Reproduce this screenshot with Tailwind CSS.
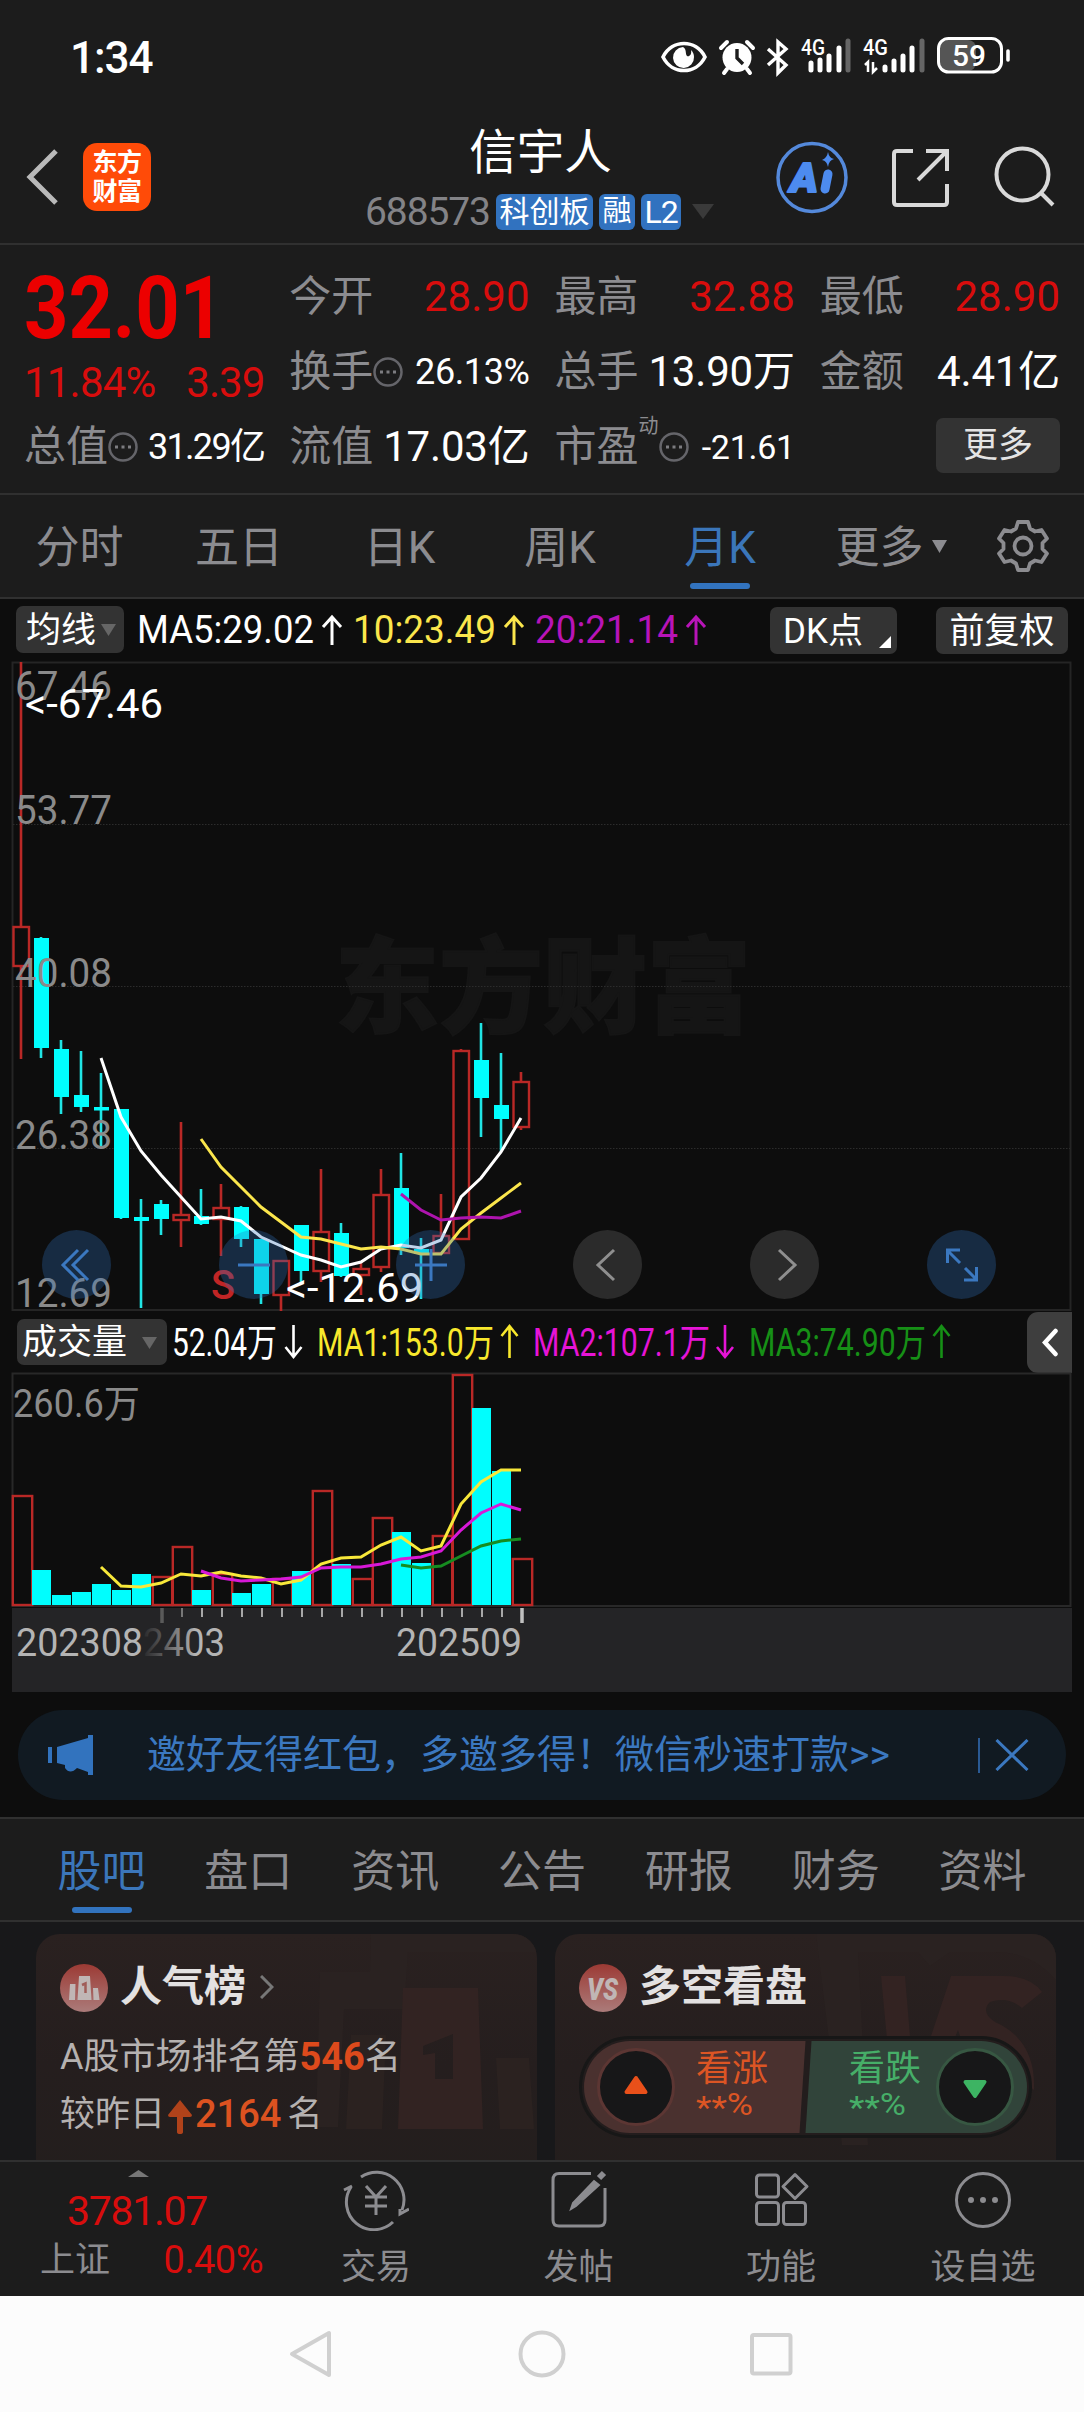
<!DOCTYPE html>
<html lang="zh-CN">
<head>
  <meta charset="UTF-8" />
  <meta name="viewport" content="width=device-width, initial-scale=1.0" />
  <title>信宇人 688573</title>
  <script src="https://cdn.jsdelivr.net/npm/@tailwindcss/browser@4"></script>
</head>
<body class="w-[1084px] h-[2412px] overflow-hidden flex flex-col bg-[#1c1c1c] text-white leading-none whitespace-nowrap font-[Roboto,'Noto_Sans_CJK_SC',sans-serif]">

  <!-- Status bar -->
  <div class="h-[114px] shrink-0 flex items-center justify-between pl-[70px] pr-[73px]">
    <div class="text-[44px] tracking-[-1px] font-medium pt-[2px]">1:34</div>
    <svg class="w-[350px] h-[40px] overflow-visible" viewBox="661 37 350 40" fill="none" stroke="#fff">
      <!-- eye -->
      <path d="M663 57c9-18 33-18 42 0c-9 18-33 18-42 0z" stroke-width="3.6" />
      <path d="M683 47a10.500 10.500 0 1 0 11 10c0-3-1-5-3-7c1 5-2 7-4 6c-2-2 0-7-4-9z" fill="#fff" stroke="none" />
      <!-- alarm -->
      <circle cx="737" cy="57.500" r="14.500" fill="#fff" stroke="none" />
      <path d="M721 48l6-6M753 48l-6-6M727 69l-3 4M747 69l3 4" stroke-width="4" stroke-linecap="round" />
      <path d="M737 49v9l6 6" stroke="#1c1c1c" stroke-width="3.4" />
      <!-- bluetooth -->
      <path d="M768 49l18 16l-8 8V42l8 7l-18 16" stroke-width="3.4" />
      <!-- signal 1 -->
      <text x="801" y="55" font-size="22" font-weight="500" fill="#fff" stroke="none" textLength="24" lengthAdjust="spacingAndGlyphs">4G</text>
      <path d="M811 63v7M820 60v10M829 56v14M839 48v22" stroke-width="5" stroke-linecap="round" />
      <path d="M848 41v29" stroke="#666" stroke-width="5" stroke-linecap="round" />
      <!-- signal 2 -->
      <text x="863" y="55" font-size="22" font-weight="500" fill="#fff" stroke="none" textLength="25" lengthAdjust="spacingAndGlyphs">4G</text>
      <path d="M868 72V62l-3 3M873 62v10l4-4" stroke-width="2.500" />
      <path d="M885 67v3M894 61v9M903 56v14M912 48v22" stroke-width="5" stroke-linecap="round" />
      <path d="M922 41v29" stroke="#666" stroke-width="5" stroke-linecap="round" />
      <!-- battery -->
      <rect x="940" y="40" width="36" height="31" rx="8" fill="#555" stroke="none" />
      <rect x="938.500" y="38.500" width="63" height="33.500" rx="10" stroke-width="3" />
      <path d="M1008 51v9" stroke-width="3.600" stroke-linecap="round" />
      <text x="952" y="66" font-size="30" font-weight="500" fill="#fff" stroke="none" textLength="34" lengthAdjust="spacingAndGlyphs">59</text>
    </svg>
  </div>

  <!-- Header -->
  <div class="h-[131px] shrink-0 flex border-b-2 border-[#303030] relative">
    <svg class="w-[32px] h-[56px] mt-[35px] ml-[26px]" viewBox="0 0 32 56" fill="none" stroke="#b9b9b9" stroke-width="5"><path d="M30 2L4 28l26 26" /></svg>
    <div class="mt-[29px] ml-[25px] size-[68px] rounded-[14px] bg-[#ff4b08] flex flex-col items-center justify-center gap-[4px] text-[25px] font-bold tracking-[-0.5px]">
      <div>东方</div>
      <div>财富</div>
    </div>
    <div class="w-[391px] ml-[194px] flex flex-col">
      <div class="mt-[16px] text-[47.5px] text-center">信宇人</div>
      <div class="mt-[14px] h-[40px] flex items-center">
        <span class="text-[39px] text-[#838387] tracking-[-1.1px] w-[127px] ml-[20px] pt-[2px]">688573</span>
        <span class="ml-[4px] h-[36px] w-[97px] rounded-[6px] bg-[#3172bf] text-[30px] flex items-center justify-center">科创板</span>
        <span class="ml-[6px] h-[36px] w-[36px] rounded-[6px] bg-[#3172bf] text-[29px] flex items-center justify-center">融</span>
        <span class="ml-[6px] h-[36px] w-[40px] rounded-[6px] bg-[#3172bf] text-[32px] tracking-[-1px] flex items-center justify-center">L2</span>
        <svg class="ml-[11px] w-[22px] h-[15px] shrink-0" viewBox="0 0 22 15"><path d="M0 0h22L11 15z" fill="#3a3a3a" /></svg>
      </div>
    </div>
    <svg class="absolute left-[770px] top-[21px] w-[300px] h-[84px]" viewBox="770 135 300 84" fill="none">
      <circle cx="812" cy="177.500" r="34" stroke="#5489db" stroke-width="3.500" />
      <text x="790" y="192" font-size="41" font-weight="900" font-style="italic" fill="#4d8bef" stroke="#4d8bef" stroke-width="2" stroke-linejoin="round" textLength="28" lengthAdjust="spacingAndGlyphs">A</text>
      <path d="M828 174l-3 15" stroke="#4d8bef" stroke-width="9" stroke-linecap="round" />
      <path d="M828 152q1 6 6 7q-5 1-6 8q-1-6-6-7q5-2 6-8z" fill="#4d8bef" />
      <g stroke="#d9d9d9" stroke-width="4">
        <path d="M913 151h-16q-3 0-3 3v48q0 3 3 3h47q3 0 3-3v-18M926 151h21v20M946 152l-28 28" />
        <circle cx="1022.500" cy="174.500" r="26" />
        <path d="M1041 193l12 12" />
      </g>
    </svg>
  </div>

  <!-- Quote panel -->
  <div class="h-[250px] shrink-0 border-b-2 border-[#303030] pt-[14px] pl-[24px] pr-[24px] grid grid-cols-4 gap-x-[25px] text-[42px]">
    <div>
      <div class="h-[98px] flex items-center text-[88px] font-bold text-[#ec0000]"><span class="origin-left scale-x-[0.88]">32.01</span></div>
      <div class="h-[52px] flex items-center justify-between text-[#d80d0d]">
        <span class="tracking-[-0.8px]">11.84%</span>
        <span class="tracking-[-1px]">3.39</span>
      </div>
      <div class="h-[75px] flex items-center">
        <span class="text-[#8c8c90]">总值</span>
        <svg class="size-[30px]" viewBox="0 0 30 30"><circle cx="15" cy="15" r="13.500" fill="none" stroke="#65656a" stroke-width="2.500" /><path d="M7 13.500h3v3h-3zM13.500 13.500h3v3h-3zM20 13.500h3v3h-3z" fill="#7c7c80" /></svg>
        <span class="ml-auto text-[36px] tracking-[-1.7px]">31.29亿</span>
      </div>
    </div>
    <div>
      <div class="h-[75px] flex items-center justify-between"><span class="text-[#8c8c90]">今开</span><span class="text-[#d80d0d]">28.90</span></div>
      <div class="h-[75px] flex items-center">
        <span class="text-[#8c8c90]">换手</span>
        <svg class="size-[30px]" viewBox="0 0 30 30"><circle cx="15" cy="15" r="13.500" fill="none" stroke="#65656a" stroke-width="2.500" /><path d="M7 13.500h3v3h-3zM13.500 13.500h3v3h-3zM20 13.500h3v3h-3z" fill="#7c7c80" /></svg>
        <span class="ml-auto text-[36px] tracking-[-0.4px]">26.13%</span>
      </div>
      <div class="h-[75px] flex items-center justify-between"><span class="text-[#8c8c90]">流值</span><span class="tracking-[-0.2px]">17.03亿</span></div>
    </div>
    <div>
      <div class="h-[75px] flex items-center justify-between"><span class="text-[#8c8c90]">最高</span><span class="text-[#d80d0d]">32.88</span></div>
      <div class="h-[75px] flex items-center justify-between"><span class="text-[#8c8c90]">总手</span><span class="tracking-[-0.2px]">13.90万</span></div>
      <div class="h-[75px] flex items-center">
        <span class="text-[#8c8c90]">市盈</span>
        <span class="text-[#8c8c90] text-[20px] self-start mt-[7px]">动</span>
        <svg class="size-[30px]" viewBox="0 0 30 30"><circle cx="15" cy="15" r="13.500" fill="none" stroke="#65656a" stroke-width="2.500" /><path d="M7 13.500h3v3h-3zM13.500 13.500h3v3h-3zM20 13.500h3v3h-3z" fill="#7c7c80" /></svg>
        <span class="ml-auto text-[34px] tracking-[-0.3px]">-21.61</span>
      </div>
    </div>
    <div>
      <div class="h-[75px] flex items-center justify-between"><span class="text-[#8c8c90]">最低</span><span class="text-[#d80d0d]">28.90</span></div>
      <div class="h-[75px] flex items-center justify-between"><span class="text-[#8c8c90]">金额</span><span class="tracking-[-0.2px]">4.41亿</span></div>
      <div class="h-[75px] flex items-center justify-end">
        <div class="w-[124px] h-[55px] mt-[-3px] rounded-[7px] bg-[#333] text-[#e4e4e4] text-[35px] flex items-center justify-center">更多</div>
      </div>
    </div>
  </div>

  <!-- Period tabs -->
  <div class="h-[104px] shrink-0 border-b-2 border-[#303030] flex text-[44px] text-[#8c8c90]">
    <div class="w-[159px] flex items-center justify-center pt-[4px]">分时</div>
    <div class="w-[160px] flex items-center justify-center pt-[4px]">五日</div>
    <div class="w-[161px] flex items-center justify-center pt-[4px]">日K</div>
    <div class="w-[160px] flex items-center justify-center pt-[4px]">周K</div>
    <div class="w-[160px] flex items-center justify-center pt-[4px] text-[#3b76ba] relative">月K
      <div class="absolute bottom-[8px] left-[50px] w-[60px] h-[6px] rounded-full bg-[#3273be]"></div>
    </div>
    <div class="w-[182px] flex items-center justify-center gap-[8px] pt-[4px]">更多
      <svg class="w-[15px] h-[13px] mt-[-3px]" viewBox="0 0 15 13"><path d="M0 0h15L7.500 13z" fill="#8c8c90" /></svg>
    </div>
    <div class="w-[82px] flex items-center justify-center">
      <svg class="w-[54px] h-[54px]" viewBox="-27 -27 54 54" fill="none" stroke="#8c8c90" stroke-width="3.800" stroke-linejoin="round">
        <path d="M-5-24H5L7-17.500L12-14.500L18.500-16L24-7.500L19.500-3V3L24 7.500L18.500 16L12 14.500L7 17.500L5 24H-5L-7 17.500L-12 14.500L-18.500 16L-24 7.500L-19.500 3V-3L-24-7.500L-18.500-16L-12-14.500L-7-17.500Z" />
        <circle r="8.500" />
      </svg>
    </div>
  </div>

  <div class="bg-[#0d0d0d] shrink-0 h-[1218px] flex flex-col">
    <!-- MA legend -->
    <div class="h-[62px] shrink-0 flex pt-[7px] text-[35px]">
      <div class="ml-[16px] w-[108px] h-[47px] rounded-[7px] bg-[#333] flex items-center pl-[10px] gap-[5px] pt-[1px]">均线
        <svg class="w-[15px] h-[12px]" viewBox="0 0 15 12"><path d="M0 0h15L7.500 12z" fill="#666" /></svg>
      </div>
      <svg class="w-[646px] h-[50px]" viewBox="124 606 646 50" font-size="38" fill="none" stroke-width="3">
        <g fill="#fff" stroke="none"><text x="137" y="643" textLength="177" lengthAdjust="spacingAndGlyphs">MA5:29.02</text></g>
        <path d="M332 645v-28M323 627l9-10l9 10" stroke="#fff" />
        <text x="353" y="643" fill="#fbe64c" textLength="143" lengthAdjust="spacingAndGlyphs">10:23.49</text>
        <path d="M514 645v-28M505 627l9-10l9 10" stroke="#fbe64c" />
        <text x="535" y="643" fill="#b814b8" textLength="143" lengthAdjust="spacingAndGlyphs">20:21.14</text>
        <path d="M696 645v-28M687 627l9-10l9 10" stroke="#b814b8" />
      </svg>
      <div class="w-[127px] h-[47px] mt-[1px] rounded-[7px] bg-[#333] flex items-center pl-[13px] pt-[1px] relative">DK点
        <svg class="absolute right-[6px] bottom-[6px] size-[12px]" viewBox="0 0 12 12"><path d="M12 0v12H0z" fill="#fff" /></svg>
      </div>
      <div class="ml-[39px] w-[132px] h-[47px] mt-[1px] rounded-[7px] bg-[#333] flex items-center justify-center pt-[1px]">前复权</div>
    </div>

    <!-- Price chart -->
    <div class="h-[650px] shrink-0 relative">
      <svg class="w-[1084px] h-[650px] block overflow-visible" viewBox="0 661 1084 650" fill="none">
        <text x="335" y="1025" font-size="104" font-weight="900" fill="#151515" stroke="#151515" stroke-width="2" textLength="416" lengthAdjust="spacingAndGlyphs">东方财富</text>
        <path d="M12.500 662.500H1070.500V1310H12.500Z" stroke="#252525" stroke-width="2" />
        <path d="M13 824.500H1070M13 986.500H1070M13 1148.500H1070" stroke="#2c2c2c" stroke-dasharray="1.500 1.500" />
        <g id="candles"></g>
        <polyline class="ma" data-start="4" data-y="1058,1117,1151,1175,1197,1219,1217,1221,1237,1246,1255,1260,1267,1262,1249,1245,1248,1240,1197,1178,1152,1118" stroke="#fff" stroke-width="3" />
        <polyline class="ma" data-start="9" data-y="1139,1167,1187,1207,1222,1237,1239,1244,1249,1247,1249,1254,1254,1229,1213,1198,1183" stroke="#fbe64c" stroke-width="3" />
        <polyline class="ma" data-start="19" data-y="1194,1210,1220,1218,1217,1218,1211" stroke="#ae14ae" stroke-width="3" />
        <g font-size="41" fill="#8a8a8a">
          <text x="15" y="700" textLength="97" lengthAdjust="spacingAndGlyphs">67.46</text>
          <text x="15" y="824" textLength="97" lengthAdjust="spacingAndGlyphs">53.77</text>
          <text x="15" y="987" textLength="97" lengthAdjust="spacingAndGlyphs">40.08</text>
          <text x="15" y="1149" textLength="97" lengthAdjust="spacingAndGlyphs">26.38</text>
          <text x="15" y="1307" textLength="97" lengthAdjust="spacingAndGlyphs">12.69</text>
        </g>
        <g font-size="41" fill="#fff">
          <text x="25" y="718" textLength="138" lengthAdjust="spacingAndGlyphs">&lt;-67.46</text>
          <text x="286" y="1302" textLength="137" lengthAdjust="spacingAndGlyphs">&lt;-12.69</text>
        </g>
        <text x="211" y="1299" font-size="41" font-weight="500" fill="#c02525" textLength="24" lengthAdjust="spacingAndGlyphs">S</text>
      </svg>

      <!-- Chart controls -->
      <div class="absolute left-[42px] top-[569px] w-[954px] flex justify-between">
        <div class="size-[69px] rounded-full bg-[#3070be]/30 flex items-center justify-center">
          <svg class="size-[34px] ml-[-6px]" viewBox="0 0 34 34" fill="none" stroke="#3b78c0" stroke-width="3"><path d="M21 2L6 17l15 15M31 2L16 17l15 15" /></svg>
        </div>
        <div class="size-[69px] rounded-full bg-[#3070be]/30 flex items-center justify-center">
          <svg class="size-[34px]" viewBox="0 0 34 34" fill="none" stroke="#3b78c0" stroke-width="3"><path d="M1 17h32" /></svg>
        </div>
        <div class="size-[69px] rounded-full bg-[#3070be]/30 flex items-center justify-center">
          <svg class="size-[34px]" viewBox="0 0 34 34" fill="none" stroke="#3b78c0" stroke-width="3"><path d="M1 17h32M17 1v32" /></svg>
        </div>
        <div class="size-[69px] rounded-full bg-[#2b2b2b] flex items-center justify-center">
          <svg class="size-[34px]" viewBox="0 0 34 34" fill="none" stroke="#8f8f8f" stroke-width="3"><path d="M23 2L7 17l16 15" /></svg>
        </div>
        <div class="size-[69px] rounded-full bg-[#2b2b2b] flex items-center justify-center">
          <svg class="size-[34px]" viewBox="0 0 34 34" fill="none" stroke="#8f8f8f" stroke-width="3"><path d="M11 2l16 15L11 32" /></svg>
        </div>
        <div class="size-[69px] rounded-full bg-[#3070be]/30 flex items-center justify-center">
          <svg class="size-[34px]" viewBox="0 0 34 34" fill="none" stroke="#3b78c0" stroke-width="3"><path d="M15 2H2.500V15M3 3l12 12M20 20l12 12M19 32h12.500V19" /></svg>
        </div>
      </div>
    </div>

    <!-- Volume legend -->
    <div class="h-[61px] shrink-0 flex text-[35px]">
      <div class="ml-[17px] mt-[8px] w-[150px] h-[46px] rounded-[7px] bg-[#333] flex items-center pl-[5px] gap-[15px] pt-[1px]">成交量
        <svg class="w-[15px] h-[12px]" viewBox="0 0 15 12"><path d="M0 0h15L7.500 12z" fill="#666" /></svg>
      </div>
      <svg class="w-[860px] h-[61px]" viewBox="167 1311 860 61" font-size="38" fill="none" stroke-width="2.600">
        <text x="172" y="1356" fill="#fff" textLength="105" lengthAdjust="spacingAndGlyphs">52.04万</text>
        <path d="M293.500 1325v32M285.500 1347l8 10l8-10" stroke="#fff" />
        <text x="317" y="1356" fill="#f8e82c" textLength="177" lengthAdjust="spacingAndGlyphs">MA1:153.0万</text>
        <path d="M509.500 1358v-32M501.500 1336l8-10l8 10" stroke="#f8e82c" />
        <text x="533" y="1356" fill="#e614d6" textLength="177" lengthAdjust="spacingAndGlyphs">MA2:107.1万</text>
        <path d="M725 1325v32M717 1347l8 10l8-10" stroke="#e614d6" />
        <text x="749" y="1356" fill="#169016" textLength="177" lengthAdjust="spacingAndGlyphs">MA3:74.90万</text>
        <path d="M941.500 1358v-32M933.500 1336l8-10l8 10" stroke="#169016" />
      </svg>
      <div class="w-[45px] h-[61px] mt-[1px] rounded-l-[11px] bg-[#3e3e3e] flex items-center justify-center">
        <svg class="w-[16px] h-[29px]" viewBox="0 0 16 29" fill="none" stroke="#fff" stroke-width="4.500" stroke-linecap="round"><path d="M13.500 3L3 14.500l10.500 11.500" /></svg>
      </div>
    </div>

    <!-- Volume chart + date axis -->
    <svg class="w-[1084px] h-[321px] shrink-0 block" viewBox="0 1372 1084 321" fill="none">
      <defs>
        <linearGradient id="fade" gradientUnits="userSpaceOnUse" x1="140" y1="0" x2="215" y2="0">
          <stop offset="0" stop-color="#242426" />
          <stop offset="0.200" stop-color="#444446" />
          <stop offset="0.750" stop-color="#b4b4b4" />
        </linearGradient>
      </defs>
      <path d="M12.500 1373.500H1070.500V1606H12.500Z" stroke="#282828" stroke-width="2" />
      <rect x="12" y="1608" width="1060" height="84" fill="#242426" />
      <g id="volumes"></g>
      <polyline class="ma" data-start="4" data-y="1567,1586,1587,1583,1574,1576,1572,1576,1578,1584,1580,1564,1558,1557,1545,1537,1551,1546,1504,1482,1470,1470" stroke="#f8e83a" stroke-width="3" />
      <polyline class="ma" data-start="9" data-y="1571,1578,1581,1580,1579,1577,1568,1567,1567,1564,1559,1557,1551,1530,1513,1504,1510" stroke="#d818d8" stroke-width="3" />
      <polyline class="ma" data-start="19" data-y="1565,1568,1566,1556,1546,1541,1539" stroke="#168c20" stroke-width="3" />
      <path d="M162 1608v15" stroke="#5a5a5a" stroke-width="3.500" />
      <path d="M182 1608v9" stroke="#777" stroke-width="2" />
      <path d="M202 1608v9M222 1608v9M242 1608v9M262 1608v9M282 1608v9M302 1608v9M322 1608v9M342 1608v9M362 1608v9M382 1608v9M402 1608v9M422 1608v9M442 1608v9M462 1608v9M482 1608v9M502 1608v9" stroke="#a8a8a8" stroke-width="2" />
      <path d="M522 1608v15" stroke="#c0c0c0" stroke-width="3.500" />
      <text x="13" y="1417" font-size="38" fill="#8a8a8a" textLength="127" lengthAdjust="spacingAndGlyphs">260.6万</text>
      <g font-size="38">
        <text x="143" y="1656" fill="url(#fade)" textLength="82" lengthAdjust="spacingAndGlyphs">2403</text>
        <text x="16" y="1656" fill="#b4b4b4" textLength="127" lengthAdjust="spacingAndGlyphs">202308</text>
        <text x="396" y="1656" fill="#b4b4b4" textLength="126" lengthAdjust="spacingAndGlyphs">202509</text>
      </g>
    </svg>

    <!-- Promo banner -->
    <div class="mt-[17px] ml-[18px] w-[1048px] h-[90px] shrink-0 rounded-full bg-[#111a22] flex items-center text-[39px] text-[#3b78c0]">
      <svg class="ml-[30px] w-[45px] h-[40px] shrink-0" viewBox="0 0 45 40" fill="#3273be"><path d="M0 12h4v16H0zM9 12L40 3V0h5v40h-5v-3l-11-4q-7 7-12 0v-3l-8-2z" /></svg>
      <div class="ml-[54px] w-[750px]">邀好友得红包，多邀多得！微信秒速打款&gt;&gt;</div>
      <div class="ml-[81px] w-[1.500px] h-[35px] bg-[#2a5a94]"></div>
      <svg class="ml-[15px] w-[34px] h-[32px]" viewBox="0 0 34 32" fill="none" stroke="#3b78c0" stroke-width="3"><path d="M1.500 1l31 30M32.500 1l-31 30" /></svg>
    </div>
  </div>

  <!-- Info tabs -->
  <div class="h-[105px] shrink-0 border-y-2 border-[#303030] px-[28px] flex text-[44px] text-[#8c8c90]">
    <div class="flex-1 flex items-center justify-center pt-[4px] text-[#3b76ba] relative">股吧
      <div class="absolute bottom-[7px] left-[44px] w-[60px] h-[6px] rounded-full bg-[#3273be]"></div>
    </div>
    <div class="flex-1 flex items-center justify-center pt-[4px]">盘口</div>
    <div class="flex-1 flex items-center justify-center pt-[4px]">资讯</div>
    <div class="flex-1 flex items-center justify-center pt-[4px]">公告</div>
    <div class="flex-1 flex items-center justify-center pt-[4px]">研报</div>
    <div class="flex-1 flex items-center justify-center pt-[4px]">财务</div>
    <div class="flex-1 flex items-center justify-center pt-[4px]">资料</div>
  </div>

  <!-- Cards -->
  <div class="h-[238px] shrink-0 bg-[#18181a] pt-[12px] pl-[36px] flex gap-[18px] overflow-hidden">
    <div class="w-[501px] h-[260px] rounded-[24px] bg-linear-to-b from-[#2a2120] via-[#251e1e] to-[#231e1d] relative overflow-hidden">
      <svg class="absolute inset-0 w-[501px] h-[260px]" viewBox="36 1934 501 260">
        <path d="M371 1934H537V2036H551L545 1952H408L404 2009H344L338 2127H316L320 1972H370Z" fill="#2a2221" />
        <path d="M403 1988H478L483 2129H398ZM423 2046V2055L435 2053V2079H453V2034Z" fill="#322322" fill-rule="evenodd" />
        <path d="M351 2035H386L382 2129H346ZM496 2058H529L534 2129H500Z" fill="#2b2220" />
      </svg>
      <div class="relative pl-[24px] pt-[30px]">
        <div class="flex items-center h-[48px]">
          <svg class="size-[48px]" viewBox="0 0 48 48">
            <defs><linearGradient id="badge" x1="0" y1="0" x2="0" y2="1"><stop offset="0" stop-color="#9c3a34" /><stop offset="1" stop-color="#ab7b7a" /></linearGradient></defs>
            <circle cx="24" cy="24" r="24" fill="url(#badge)" />
            <path d="M10 20h5.500L15 36H9zM19 12h11l1.500 24H17.500zM33 24h5l1.500 12H33.500z" fill="#c0b6b5" />
            <path d="M22 21l3.500-1.500V29" fill="none" stroke="#a05c58" stroke-width="2.500" />
          </svg>
          <span class="ml-[12px] text-[42px] font-bold text-[#e3e1e1] mt-[-3px]">人气榜</span>
          <svg class="ml-[14px] mt-[-2px] w-[14px] h-[24px]" viewBox="0 0 14 24" fill="none" stroke="#777" stroke-width="3"><path d="M1 1l11 11L1 23" /></svg>
        </div>
        <div class="flex items-center h-[40px] mt-[25px] text-[36px] text-[#b5b1b0]">A股市场排名第<span class="text-[38px] font-bold text-[#dd4a1c]">546</span>名</div>
        <div class="flex items-center h-[40px] mt-[17px] text-[35px] text-[#b5b1b0]">较昨日
          <svg class="ml-[3px] mt-[6px] w-[24px] h-[34px]" viewBox="0 0 24 34" fill="#b0421a"><path d="M12 0l12 15q0 2-2 2h-7v15q0 2-3 2t-3-2V17H2q-2 0-2-2z" /></svg>
          <span class="ml-[3px] mr-[6px] text-[38px] font-medium text-[#dc5220]">2164</span>名
        </div>
      </div>
    </div>

    <div class="w-[501px] h-[260px] rounded-[24px] bg-linear-to-b from-[#2a2120] via-[#251e1e] to-[#231e1d] relative overflow-hidden">
      <svg class="absolute inset-0 w-[501px] h-[260px]" viewBox="555 1934 501 260">
        <path d="M816 1934H1056V1980Q1030 1950 990 1952H950L930 1966L918 1952H858L868 2145H842Z" fill="#2a2221" />
        <path d="M881 1976H905L912 2060H889ZM923 2060L951 1976H1000Q1030 1975 1042 1992L1022 2008Q1008 1996 990 2002Q980 2012 995 2022Q1036 2040 1034 2090L1000 2060H968L958 2030L946 2060Z" fill="#332322" />
      </svg>
      <div class="relative pl-[24px] pt-[30px]">
        <div class="flex items-center h-[48px]">
          <svg class="size-[48px]" viewBox="0 0 48 48">
            <circle cx="24" cy="24" r="24" fill="url(#badge)" />
            <text x="8" y="35.500" font-size="32" font-weight="900" font-style="italic" fill="#c0b6b5" textLength="31" lengthAdjust="spacingAndGlyphs">VS</text>
          </svg>
          <span class="ml-[12px] text-[42px] font-bold text-[#e3e1e1] mt-[-2px]">多空看盘</span>
        </div>
        <svg class="mt-[24px] w-[454px] h-[102px] block" viewBox="579 2036 454 102">
          <defs><clipPath id="pill"><rect x="584" y="2041" width="443" height="92" rx="46" /></clipPath></defs>
          <rect x="580.500" y="2037.500" width="450" height="99" rx="49.500" fill="#231d1d" stroke="#171717" stroke-width="3" />
          <g clip-path="url(#pill)">
            <path d="M580 2041H805.500L799.500 2133H580Z" fill="#4a312f" />
            <path d="M811.500 2041H1030V2133H805.500Z" fill="#31443a" />
          </g>
          <circle cx="636" cy="2087" r="37.500" fill="#171718" stroke="#5c3633" stroke-width="3" />
          <circle cx="975" cy="2087" r="37.500" fill="#171718" stroke="#375742" stroke-width="3" />
          <path d="M636 2078l9.500 14h-19z" fill="#e9501a" stroke="#e9501a" stroke-width="4" stroke-linejoin="round" />
          <path d="M975 2096l9.500-14h-19z" fill="#3db463" stroke="#3db463" stroke-width="4" stroke-linejoin="round" />
          <g fill="#dc5524">
            <text x="696" y="2081" font-size="36">看涨</text>
            <text x="696" y="2115" font-size="31" textLength="57" lengthAdjust="spacingAndGlyphs"><tspan dy="3">**</tspan><tspan dy="-3">%</tspan></text>
          </g>
          <g fill="#46ae68">
            <text x="849" y="2081" font-size="36">看跌</text>
            <text x="849" y="2115" font-size="31" textLength="57" lengthAdjust="spacingAndGlyphs"><tspan dy="3">**</tspan><tspan dy="-3">%</tspan></text>
          </g>
        </svg>
      </div>
    </div>
  </div>

  <!-- Bottom bar -->
  <div class="h-[136px] shrink-0 border-t-2 border-[#303030] flex text-[35px] text-[#8c8c90]">
    <div class="w-[275px] flex flex-col">
      <svg class="mt-[8px] ml-[128px] w-[21px] h-[7px]" viewBox="0 0 21 7"><path d="M10.500 0L21 7H0z" fill="#777" /></svg>
      <div class="mt-[14px] ml-[67px] text-[41px] tracking-[-1.300px] text-[#d80d0d]">3781.07</div>
      <div class="mt-[9px] ml-[40px] w-[223px] flex items-center justify-between"><span>上证</span><span class="text-[38px] tracking-[-0.500px] text-[#d80d0d]">0.40%</span></div>
    </div>
    <div class="w-[202px] flex flex-col items-center">
      <svg class="mt-[7px] w-[66px] h-[62px]" viewBox="-33 -31 66 62" fill="none" stroke="#8c8c90" stroke-width="3">
        <path d="M-15-23A27.500 27.500 0 0 1 26 10M17 22A27.500 27.500 0 0 1-25-13M-32-10l8-4M33 9l-9 5V9" />
        <path d="M-10-14L0-3L10-14M0-3V15M-11-3H11M-11 6H11" />
      </svg>
      <div class="mt-[19px]">交易</div>
    </div>
    <div class="w-[203px] flex flex-col items-center">
      <svg class="mt-[7px] w-[58px] h-[62px]" viewBox="-29 -31 58 62" fill="none" stroke="#8c8c90" stroke-width="3">
        <path d="M12-26.500H-20Q-26-26.500-26-20V20Q-26 26 -20 26H20Q26 26 26 20V-12" />
        <path d="M15-19l5 4L-3 6l-5 3l2-6z" fill="#8c8c90" stroke-width="2" />
        <path d="M20-22l5-5" stroke-width="6" />
      </svg>
      <div class="mt-[19px]">发帖</div>
    </div>
    <div class="w-[202px] flex flex-col items-center">
      <svg class="mt-[7px] w-[58px] h-[62px]" viewBox="-29 -31 58 62" fill="none" stroke="#8c8c90" stroke-width="3">
        <rect x="-24.500" y="-25" width="22" height="22" rx="3" />
        <rect x="-24.500" y="2.500" width="22" height="22" rx="3" />
        <rect x="2.500" y="2.500" width="22" height="22" rx="3" />
        <path d="M14-25.500L26-13.500L14-1.500L2-13.500Z" stroke-linejoin="round" />
      </svg>
      <div class="mt-[19px]">功能</div>
    </div>
    <div class="w-[202px] flex flex-col items-center">
      <svg class="mt-[7px] w-[58px] h-[62px]" viewBox="-29 -31 58 62">
        <circle r="26.500" fill="none" stroke="#8c8c90" stroke-width="3" />
        <circle cx="-12" r="3" fill="#8c8c90" /><circle r="3" fill="#8c8c90" /><circle cx="12" r="3" fill="#8c8c90" />
      </svg>
      <div class="mt-[19px]">设自选</div>
    </div>
  </div>

  <!-- System navigation -->
  <div class="h-[116px] shrink-0 bg-[#fcfcfc] flex items-center">
    <svg class="ml-[288px] w-[45px] h-[50px]" viewBox="0 0 45 50" fill="none" stroke="#d0d0d0" stroke-width="4" stroke-linejoin="round"><path d="M41 4v42L4 25z" /></svg>
    <svg class="ml-[185px] w-[48px] h-[48px]" viewBox="0 0 48 48" fill="none" stroke="#d0d0d0" stroke-width="4"><circle cx="24" cy="24" r="21.500" /></svg>
    <svg class="ml-[183px] w-[44px] h-[44px]" viewBox="0 0 44 44" fill="none" stroke="#d0d0d0" stroke-width="4"><rect x="3" y="3" width="38.500" height="38.500" rx="2" /></svg>
  </div>

  <script>
    // dir (1 up, 0 down), high, body top, body bottom, low, volume top
    const bars = [
      [1, 662, 926, 967, 1059, 1495], [0, 937, 938, 1048, 1058, 1570], [0, 1040, 1049, 1097, 1114, 1595],
      [0, 1051, 1095, 1107, 1112, 1592], [0, 1073, 1107, 1110.5, 1147, 1584], [0, 1109, 1109, 1218, 1219, 1590],
      [0, 1199, 1217, 1221, 1308, 1574], [0, 1200, 1204, 1219, 1235, 1576], [1, 1122, 1214, 1221, 1247, 1546],
      [0, 1189, 1216, 1224, 1225, 1590], [1, 1184, 1207, 1220, 1256, 1573], [0, 1206, 1207, 1239, 1247, 1593],
      [0, 1239, 1239, 1294, 1304, 1584], [1, 1260, 1260, 1296, 1311, 1578], [0, 1225, 1225, 1271, 1282, 1571],
      [1, 1169, 1231, 1272, 1282, 1490], [0, 1223, 1233, 1276, 1277, 1564], [1, 1262, 1268, 1276, 1295, 1578],
      [1, 1169, 1194, 1268, 1272, 1517], [0, 1153, 1188, 1248, 1255, 1532], [0, 1238, 1249, 1254, 1299, 1563],
      [1, 1194, 1235, 1254, 1254, 1535], [1, 1049, 1050, 1240, 1240, 1374], [0, 1023, 1060, 1098, 1137, 1408],
      [0, 1053, 1105, 1119, 1151, 1471], [1, 1072, 1081, 1128, 1130, 1558]
    ];
    const red = '#b92826', cyan = '#00fefe';
    let candles = '', volumes = '';
    bars.forEach(([up, hi, top, bot, lo, vol], i) => {
      const x = 21 + i * 20;
      if (up) {
        candles += `<path d="M${x} ${hi}V${top}M${x} ${bot}V${lo}" stroke="${red}" stroke-width="2.6"/>
          <rect x="${x - 7.5}" y="${top + 1}" width="15.5" height="${bot - top - 2}" stroke="${red}" stroke-width="2.4"/>`;
      } else {
        candles += `<path d="M${x} ${hi}V${lo}" stroke="#20e4e4" stroke-width="2.6"/>
          <rect x="${x - 7}" y="${top}" width="15" height="${bot - top}" fill="${cyan}"/>`;
      }
      // bar 7 closed flat but its volume is drawn as an up bar
      volumes += up || i === 7
        ? `<rect x="${x - 8.2}" y="${vol + 1}" width="19.4" height="${1605 - vol - 1}" stroke="${red}" stroke-width="2.4"/>`
        : `<rect x="${x - 9}" y="${vol}" width="19" height="${1605 - vol}" fill="${cyan}"/>`;
    });
    document.getElementById('candles').innerHTML = candles;
    document.getElementById('volumes').innerHTML = volumes;
    document.querySelectorAll('.ma').forEach(line => {
      const start = +line.dataset.start;
      line.setAttribute('points', line.dataset.y.split(',').map((y, i) => `${21 + (start + i) * 20},${y}`).join(' '));
    });
  </script>
</body>
</html>
